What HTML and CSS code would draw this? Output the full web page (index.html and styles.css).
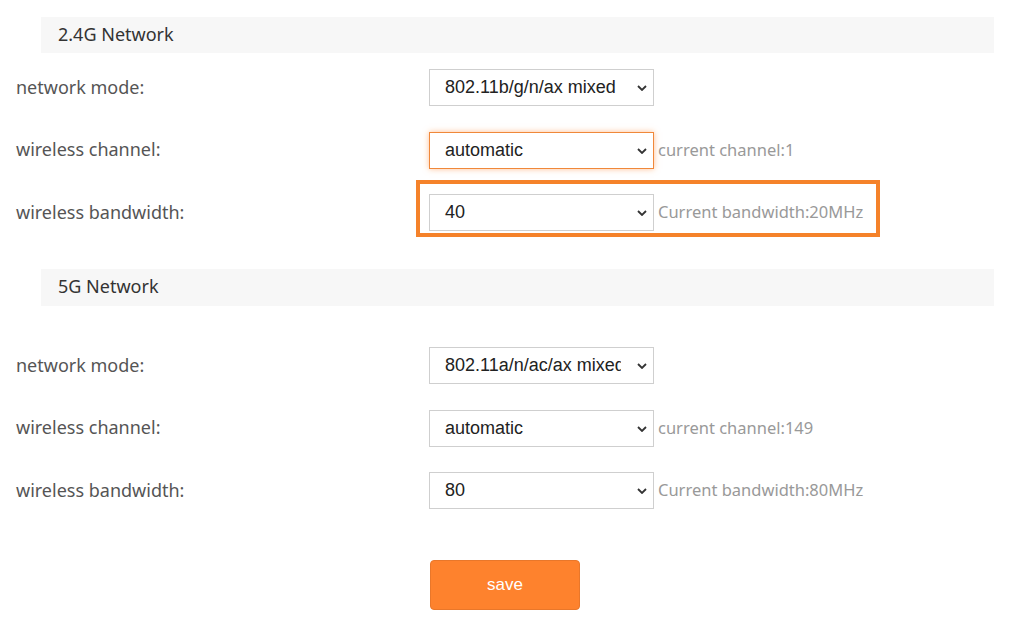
FILE: index.html
```html
<!DOCTYPE html>
<html>
<head>
  <title>Wireless settings</title>
  <link rel="stylesheet" href="styles.css">
</head>
<body>

<div class="wrap">
  <div class="section-title first">2.4G Network</div>

  <div class="row">
    <div class="label">network mode:</div>
    <div class="field">
      <div class="select">802.11b/g/n/ax mixed<svg class="arrow" viewBox="0 0 10 6"><path d="M1 1 L5 5 L9 1"/></svg></div>
    </div>
  </div>
  <div class="row">
    <div class="label">wireless channel:</div>
    <div class="field">
      <div class="select focused">automatic<svg class="arrow" viewBox="0 0 10 6"><path d="M1 1 L5 5 L9 1"/></svg></div>
      <span class="hint">current channel:1</span>
    </div>
  </div>
  <div class="row">
    <div class="label">wireless bandwidth:</div>
    <div class="field">
      <div class="mark"></div>
      <div class="select">40<svg class="arrow" viewBox="0 0 10 6"><path d="M1 1 L5 5 L9 1"/></svg></div>
      <span class="hint">Current bandwidth:20MHz</span>
    </div>
  </div>

  <div class="section-title second">5G Network</div>

  <div class="row">
    <div class="label">network mode:</div>
    <div class="field">
      <div class="select"><span class="clip">802.11a/n/ac/ax mixed</span><svg class="arrow" viewBox="0 0 10 6"><path d="M1 1 L5 5 L9 1"/></svg></div>
    </div>
  </div>
  <div class="row">
    <div class="label">wireless channel:</div>
    <div class="field">
      <div class="select">automatic<svg class="arrow" viewBox="0 0 10 6"><path d="M1 1 L5 5 L9 1"/></svg></div>
      <span class="hint">current channel:149</span>
    </div>
  </div>
  <div class="row">
    <div class="label">wireless bandwidth:</div>
    <div class="field">
      <div class="select">80<svg class="arrow" viewBox="0 0 10 6"><path d="M1 1 L5 5 L9 1"/></svg></div>
      <span class="hint">Current bandwidth:80MHz</span>
    </div>
  </div>

  <div class="actions">
    <button class="btn-save">save</button>
  </div>
</div>

</body>
</html>
```

FILE: styles.css
```css
body {
  margin: 0;
  background: #fff;
  font-family: "Noto Sans", "Open Sans", sans-serif;
}
.wrap {
  padding: 17px 15px 0 16px;
}
.section-title {
  margin-left: 25px;
  height: 36px;
  line-height: 35px;
  padding-left: 17px;
  background: #f7f7f7;
  color: #333;
  font-size: 18px;
}
.section-title.first {
  margin-bottom: 16px;
}
.section-title.second {
  margin-top: 38px;
  height: 37px;
  margin-bottom: 41px;
}
.row {
  display: flex;
  align-items: center;
  height: 37px;
  margin-bottom: 25.5px;
}
.label {
  width: 413px;
  margin-top: -2px;
  color: #555;
  font-size: 18px;
}
.field {
  position: relative;
  display: flex;
  align-items: center;
}
.select {
  position: relative;
  box-sizing: border-box;
  width: 225px;
  height: 37px;
  line-height: 35px;
  padding-left: 15px;
  border: 1px solid #cfcfcf;
  background: #fff;
  color: #222;
  font-family: "Liberation Sans", Arial, sans-serif;
  font-size: 18px;
  white-space: nowrap;
}
.select .clip {
  display: inline-block;
  width: 176px;
  overflow: hidden;
  vertical-align: top;
}
.select.focused {
  border-color: #f0883a;
  box-shadow: 0 0 6px rgba(255, 140, 60, 0.55);
}
.arrow {
  position: absolute;
  right: 6px;
  top: 15px;
  width: 10px;
  height: 6px;
  fill: none;
  stroke: #333;
  stroke-width: 1.8;
}
.hint {
  margin-left: 4px;
  margin-top: -2px;
  color: #999;
  font-size: 16.5px;
}
.mark {
  position: absolute;
  left: -13px;
  top: -14px;
  width: 464px;
  height: 57px;
  box-sizing: border-box;
  border: 4px solid #f5822a;
}
.actions {
  padding: 25.5px 0 0 414px;
}
.btn-save {
  width: 150px;
  height: 50px;
  border: 1px solid #e9772a;
  border-radius: 4px;
  background: #fe822d;
  color: #fff;
  font-family: "Liberation Sans", Arial, sans-serif;
  font-size: 17px;
}
```
